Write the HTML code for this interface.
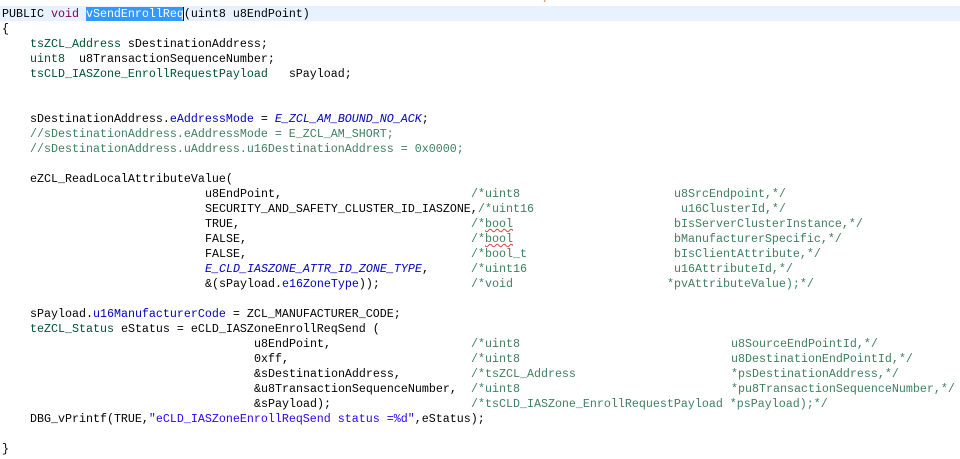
<!DOCTYPE html>
<html><head><meta charset="utf-8"><style>
html,body{margin:0;padding:0;background:#fff;width:960px;height:459px;overflow:hidden}
body{position:relative;font-family:"Liberation Mono",monospace;font-size:11.67px;color:#000}
.l{position:absolute;left:0;width:960px;height:15px;line-height:15px;white-space:pre}
.l>span{position:absolute;top:1px}
.t{color:#005032}.k{color:#7f0055}.f{color:#0000c0}.e{color:#0000c0;font-style:italic}
.c{color:#3f7f5f}.s{color:#2a00ff}
.sq{text-decoration:underline wavy #e04040;text-decoration-thickness:1px}
</style></head><body>
<div style="position:absolute;left:543px;top:-6px;font-size:11px;color:#c08040">/</div>
<div class="l" style="top:6px;background:#e8f2fe"><span style="left:2px"><span style="position:static">PUBLIC </span><span class="k" style="position:static">void</span> <span style="position:static;background:#3399ff;color:#fff">vSendEnrollReq</span><span style="position:static;border-left:1px solid #000;margin-left:-1px">(uint8 u8EndPoint)</span></span></div>
<div class="l" style="top:21px"><span style="left:2px">{</span></div>
<div class="l" style="top:36px"><span style="left:30px"><span class="t" style="position:static">tsZCL_Address</span> sDestinationAddress;</span></div>
<div class="l" style="top:51px"><span style="left:30px"><span class="t" style="position:static">uint8</span>  u8TransactionSequenceNumber;</span></div>
<div class="l" style="top:66px"><span style="left:30px"><span class="t" style="position:static">tsCLD_IASZone_EnrollRequestPayload</span>   sPayload;</span></div>
<div class="l" style="top:111px"><span style="left:30px">sDestinationAddress.<span class="f" style="position:static">eAddressMode</span> = <span class="e" style="position:static">E_ZCL_AM_BOUND_NO_ACK</span>;</span></div>
<div class="l" style="top:126px"><span class="c" style="left:30px">//sDestinationAddress.eAddressMode = E_ZCL_AM_SHORT;</span></div>
<div class="l" style="top:141px"><span class="c" style="left:30px">//sDestinationAddress.uAddress.u16DestinationAddress = 0x0000;</span></div>
<div class="l" style="top:171px"><span style="left:30px">eZCL_ReadLocalAttributeValue(</span></div>
<div class="l" style="top:186px"><span style="left:205px">u8EndPoint,</span><span class="c" style="left:471px">/*uint8</span><span class="c" style="left:674px">u8SrcEndpoint,*/</span></div>
<div class="l" style="top:201px"><span style="left:205px">SECURITY_AND_SAFETY_CLUSTER_ID_IASZONE,</span><span class="c" style="left:478px">/*uint16</span><span class="c" style="left:681px">u16ClusterId,*/</span></div>
<div class="l" style="top:216px"><span style="left:205px">TRUE,</span><span class="c" style="left:471px">/*<span class="sq" style="position:static">bool</span></span><span class="c" style="left:674px">bIsServerClusterInstance,*/</span></div>
<div class="l" style="top:231px"><span style="left:205px">FALSE,</span><span class="c" style="left:471px">/*<span class="sq" style="position:static">bool</span></span><span class="c" style="left:674px">bManufacturerSpecific,*/</span></div>
<div class="l" style="top:246px"><span style="left:205px">FALSE,</span><span class="c" style="left:471px">/*bool_t</span><span class="c" style="left:674px">bIsClientAttribute,*/</span></div>
<div class="l" style="top:261px"><span class="e" style="left:205px">E_CLD_IASZONE_ATTR_ID_ZONE_TYPE</span><span style="left:422px">,</span><span class="c" style="left:471px">/*uint16</span><span class="c" style="left:674px">u16AttributeId,*/</span></div>
<div class="l" style="top:276px"><span style="left:205px">&amp;(sPayload.<span class="f" style="position:static">e16ZoneType</span>));</span><span class="c" style="left:471px">/*void</span><span class="c" style="left:667px">*pvAttributeValue);*/</span></div>
<div class="l" style="top:306px"><span style="left:30px">sPayload.<span class="f" style="position:static">u16ManufacturerCode</span> = ZCL_MANUFACTURER_CODE;</span></div>
<div class="l" style="top:321px"><span style="left:30px"><span class="t" style="position:static">teZCL_Status</span> eStatus = eCLD_IASZoneEnrollReqSend (</span></div>
<div class="l" style="top:336px"><span style="left:254px">u8EndPoint,</span><span class="c" style="left:471px">/*uint8</span><span class="c" style="left:731px">u8SourceEndPointId,*/</span></div>
<div class="l" style="top:351px"><span style="left:254px">0xff,</span><span class="c" style="left:471px">/*uint8</span><span class="c" style="left:731px">u8DestinationEndPointId,*/</span></div>
<div class="l" style="top:366px"><span style="left:254px">&amp;sDestinationAddress,</span><span class="c" style="left:471px">/*tsZCL_Address</span><span class="c" style="left:731px">*psDestinationAddress,*/</span></div>
<div class="l" style="top:381px"><span style="left:254px">&amp;u8TransactionSequenceNumber,</span><span class="c" style="left:471px">/*uint8</span><span class="c" style="left:731px">*pu8TransactionSequenceNumber,*/</span></div>
<div class="l" style="top:396px"><span style="left:254px">&amp;sPayload);</span><span class="c" style="left:471px">/*tsCLD_IASZone_EnrollRequestPayload *psPayload);*/</span></div>
<div class="l" style="top:411px"><span style="left:30px">DBG_vPrintf(TRUE,<span class="s" style="position:static">"eCLD_IASZoneEnrollReqSend status =%d"</span>,eStatus);</span></div>
<div class="l" style="top:441px"><span style="left:2px">}</span></div>
</body></html>
